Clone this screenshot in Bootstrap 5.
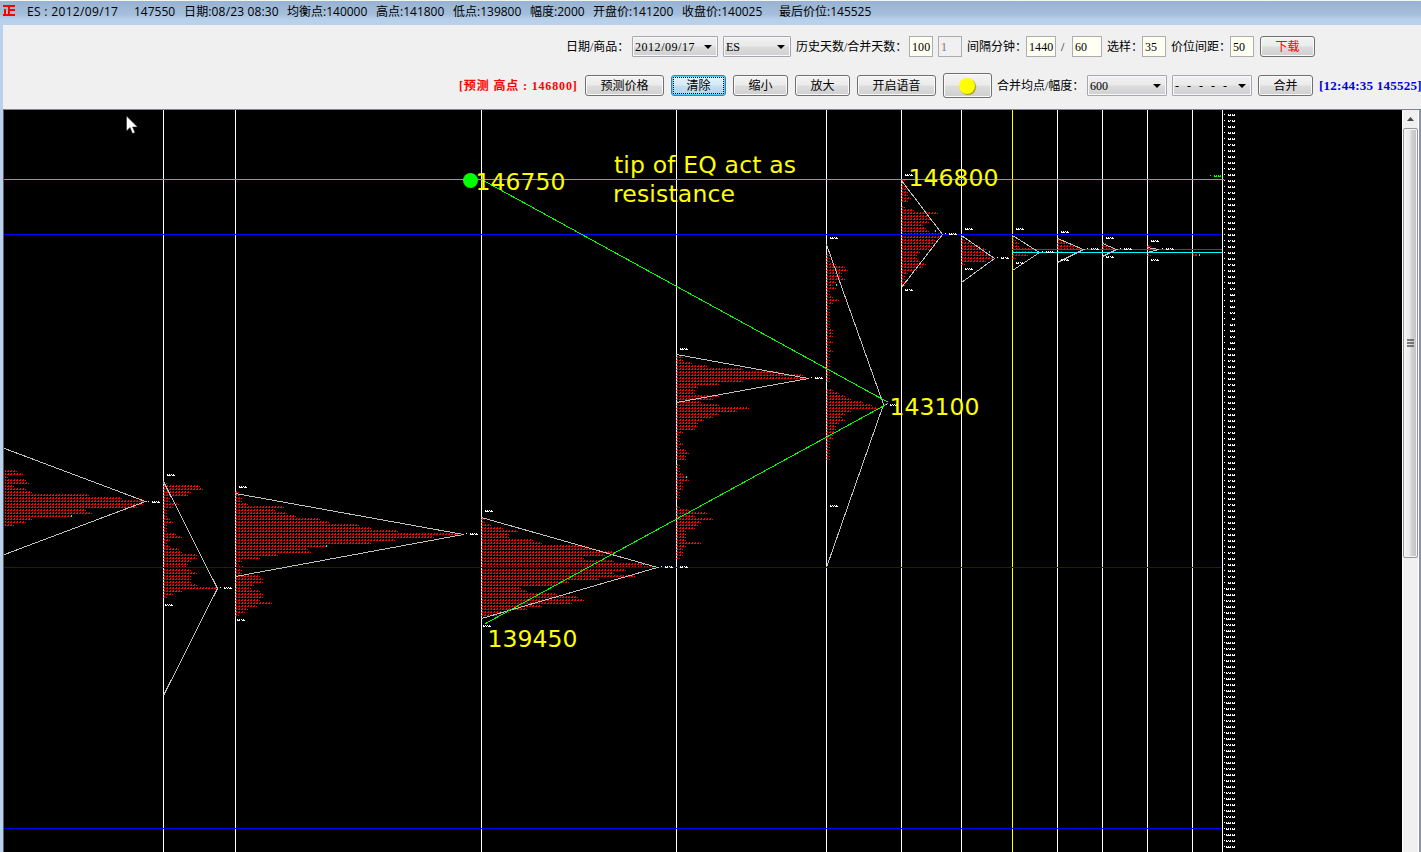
<!DOCTYPE html>
<html lang="zh-CN">
<head>
<meta charset="utf-8">
<meta name="viewport" content="width=device-width, initial-scale=1">
<title>ES 2012/09/17</title>
<link href="https://cdn.jsdelivr.net/npm/bootstrap@5.3.0/dist/css/bootstrap.min.css" rel="stylesheet">
<script src="https://cdn.jsdelivr.net/npm/bootstrap@5.3.0/dist/js/bootstrap.bundle.min.js"></script>
<style>
html,body{height:100%;overflow:hidden}
body{background:#b9d1ea;color:#000;font:12px/1 "Liberation Serif","Noto Sans CJK SC",serif}
.titlebar{height:25px;border-top:1px solid #f4f6f4;background:linear-gradient(#98b3d1,#a4bedb 55%,#b7cfe9 75%,#b9d1ea);font:12px/22px "Open Sans","Noto Sans CJK SC",sans-serif;padding-left:2px;gap:8px}
.logo{width:14px;height:12px;margin:4px 3px 0 0;flex:none}
.f42{width:42px}.f69{width:69px}.f81{width:81px}.f55{width:55px}.f91{width:91px;letter-spacing:.33px}.f95{width:95px;letter-spacing:.15px}
.titlebar .gapped{margin-left:8px}
.tools{height:84px;background:#f0f0f0;margin-left:3px}
.bar1{height:43px;gap:5px;padding-left:563px}
.bar2{height:35px;gap:7px;padding-left:456px}
.bar1>*,.bar2>*{flex:none;white-space:nowrap}
.cap{line-height:20px}
.bar1 .cap,.bar2 .cap{padding-top:1px}
.win{height:21px;padding:1px 0 0;border:1px solid #707070;border-radius:3px;background:linear-gradient(#f3f3f3,#ebebeb 48%,#dddddd 52%,#cfcfcf);box-shadow:inset 0 0 0 1px #fafafa;color:#000;font-size:12px;line-height:18px;text-align:center}
.win.hot{border-color:#3c7fb1;background:linear-gradient(#e5f3fb,#d5eaf6 48%,#c3dff0 52%,#b5d3e6);box-shadow:inset 0 0 0 1px #4fd0f5;outline:1px dotted #000;outline-offset:-3px}
.dd{height:21px;border:1px solid #a5a8b0;border-radius:1px;background:linear-gradient(#f1f1f1,#e9e9e9 48%,#dcdcdc 52%,#d0d0d0);box-shadow:inset 0 0 0 1px #f8f8f8;padding:0 5px 0 2px}
.dd i{border:4px solid transparent;border-top-color:#000;border-bottom:0}
.datum{letter-spacing:.54px}
.box{height:21px;border:1px solid #abadb3;background:#fffff2;padding-left:2px;line-height:20px;letter-spacing:.1px}
.box.off{background:#f0f0f0;color:#7a7a7a}
.w6{width:6px}.w24{width:24px}.w30{width:30px}.w54{width:54px}.w55{width:55px}.w61{width:61px}.w68{width:68px}.w79{width:79px}.w80{width:80px}.w83{width:83px}.w86{width:86px}.w108{width:108px}.w119{width:119px}
.lamp{width:49px;height:25px}
.lamp span{display:block;width:16px;height:16px;border-radius:50%;background:#ff0;box-shadow:1px 1px 1px #a09a20;margin:0 auto;position:relative;left:-1px}
.forecast{color:#f00;font-weight:700;line-height:18px;letter-spacing:.85px}
.clock{color:#0000e8;font-weight:700;font-size:13px;line-height:18px;letter-spacing:.25px}
#load{margin-left:1px;color:#f00}#mix,#dash{margin-left:-2px}#merge,#clk{margin-left:-1px}#dash span{letter-spacing:2.5px}
.stage{margin-left:3px;height:743px;border-top:1px solid #80848c;border-left:1px solid #555d68}
.plot{width:1398px;height:742px;background:#000;flex:none}
.scroll{width:16px;background:#f0f0f0;flex:none;border-left:1px solid #fff}
.up{height:18px}
.thumb{height:430px;border:1px solid #979797;border-radius:2px;background:linear-gradient(90deg,#f5f5f5,#e9e9e9 45%,#d3d3d8 55%,#bfbfc4);box-shadow:inset 0 0 0 1px #f6f6f6}
.edge{width:4px;border-left:1px solid #fff;background:#8a93a2}
svg{display:block}
</style>
</head>
<body>
<header class="titlebar d-flex text-nowrap">
  <svg class="logo" viewBox="0 0 14 12" fill="#f00"><path d="M1 0h12v2H8v2h5v2H8v3h5v2H1V9h1V4h2v5h2V2H1z"/></svg>
  <span class="f91">ES : 2012/09/17</span><span class="f42 gapped">147550</span><span class="f95">日期:08/23 08:30</span><span class="f81">均衡点:140000</span><span class="f69">高点:141800</span><span class="f69">低点:139800</span><span class="f55">幅度:2000</span><span class="f81">开盘价:141200</span><span class="f81">收盘价:140025</span><span class="gapped">最后价位:145525</span>
</header>
<section class="tools">
  <div class="bar1 d-flex align-items-center">
    <span class="cap w61">日期/商品：</span>
    <div class="dd w86 d-flex align-items-center justify-content-between"><span class="datum">2012/09/17</span><i></i></div>
    <div class="dd w68 d-flex align-items-center justify-content-between"><span>ES</span><i></i></div>
    <span class="cap w108">历史天数/合并天数：</span>
    <div class="box w24">100</div><div class="box off w24">1</div>
    <span class="cap w54">间隔分钟：</span>
    <div class="box w30">1440</div><span class="cap w6">/</span><div class="box w30">60</div>
    <span class="cap w30">选样：</span><div class="box w24">35</div>
    <span class="cap w54">价位间距：</span><div class="box w24">50</div>
    <button class="win w55" id="load">下载</button>
  </div>
  <div class="bar2 d-flex align-items-center">
    <span class="forecast w119">[预测 高点 : 146800]</span>
    <button class="win w79">预测价格</button><button class="win hot w55">清除</button><button class="win w55">缩小</button><button class="win w55">放大</button><button class="win w79">开启语音</button>
    <button class="win lamp"><span></span></button>
    <span class="cap w83" id="mix">合并均点/幅度：</span>
    <div class="dd w80 d-flex align-items-center justify-content-between"><span>600</span><i></i></div>
    <div class="dd w80 d-flex align-items-center justify-content-between" id="dash"><span>- - - - -</span><i></i></div>
    <button class="win w55" id="merge">合并</button>
    <span class="clock" id="clk">[12:44:35 145525]</span>
  </div>
</section>
<main class="stage d-flex">
  <svg class="plot" id="plot" viewBox="4 110 1398 742" shape-rendering="crispEdges">
    <defs><pattern id="cell" width="3" height="3" patternUnits="userSpaceOnUse" x="0" y="2"><path d="M2 0h1v2H1V1h1z" fill="#f00"/></pattern></defs>
    <g id="grid"></g><g id="profiles"></g><g id="marks"></g>
    <circle cx="470.5" cy="180.5" r="7.5" fill="#0f0" shape-rendering="auto"/>
    <g fill="#ff0" font-family="DejaVu Sans, sans-serif" font-size="23.5">
      <text x="475.500" y="190" textLength="90">146750</text>
      <text x="614" y="173" textLength="182">tip of EQ act as</text>
      <text x="613" y="202" textLength="122">resistance</text>
      <text x="908.500" y="186" textLength="90">146800</text>
      <text x="889.500" y="415" textLength="90">143100</text>
      <text x="487.500" y="647" textLength="90">139450</text>
    </g>
    <path d="M126.500 116v15l3.500-3.500 2.500 6 2.500-1-2.500-5.500h5z" fill="#fff" stroke="#222" stroke-width=".5" shape-rendering="auto"/>
  </svg>
  <div class="scroll">
    <div class="up d-flex align-items-center justify-content-center"><svg width="7" height="4"><path d="M0 4 3.500 0 7 4z" fill="#444"/></svg></div>
    <div class="thumb d-flex align-items-center justify-content-center"><svg width="8" height="9"><path d="M0 1h7M0 4h7M0 7h7" stroke="#555" stroke-width="1.500"/></svg></div>
  </div>
  <div class="edge"></div>
</main>
<script>
const NS='http://www.w3.org/2000/svg';
function add(id,tag,attrs){const e=document.createElementNS(NS,tag);for(const k in attrs)e.setAttribute(k,attrs[k]);document.getElementById(id).append(e)}
const px=(id,x,y,w,h,fill)=>add(id,'rect',{x,y,width:w,height:h,fill});
// session separators
[163,235,481,676,826,901,961,1057,1102,1147,1192,1222].forEach(x=>px('grid',x,110,1,742,'#fff'));
px('grid',1012,110,1,742,'#ff0');
// volume profiles: left edge, first row, cells in each row
const profiles=[
[4,470,[4,6,1,7,8,3,7,9,28,39,47,46,44,27,29,22,9,7,3]],
[163,482,[1,12,13,9,8,2,2,5,3,1,1,1,2,3,1,1,1,4,6,2,1,2,5,6,11,11,9,8,8,9,11,9,9,9,11,18,6,3,1]],
[235,491,[1,1,2,2,4,16,13,17,20,28,31,41,45,54,74,66,53,45,30,24,25,14,8,2,1,3,2,2,8,9,9,6,5,8,9,9,8,12,7,4,3,1]],
[481,518,[1,1,3,7,12,9,9,17,20,35,38,44,41,34,44,54,57,48,44,51,39,29,25,13,15,25,32,34,30,20,15,9,5]],
[676,356,[2,2,5,10,22,34,42,43,22,14,7,6,6,14,12,8,14,24,20,14,12,9,7,7,6,2,1,1,1,2,1,3,4,3,3,0,1,1,1,2,3,4,2,2,2,1,1,1,0,0,1,4,10,6,12,8,7,6,3,3,3,3,8,3,2,2,2,1]],
[826,254,[1,1,1,3,6,7,5,5,6,3,2,3,1,1,2,4,2,1,1,1,1,1,1,1,1,2,2,2,1,2,1,1,2,1,1,1,1,1,1,1,1,1,1,0,0,2,4,6,8,12,15,17,8,6,5,6,4,3,3,3,2,2,1,1,1,1,1,1,1]],
[901,179,[1,1,2,2,2,2,3,2,0,1,4,12,9,10,9,7,8,9,13,13,11,11,10,9,6,5,5,6,8,7,5,2,1,1,1,1]],
[961,236,[1,1,3,6,8,8,9,11,8,1]],
[1012,236,[1,1,2,2,7,7,5,1]],
[1057,239,[1,3,6,8,2]],[1102,242,[1,2,4]],[1147,245,[1,3,0,1]],[1192,254,[1]]];
profiles.forEach(([x,y,rows])=>{
  rows.forEach((n,i)=>{if(n)px('profiles',x+1,y+i*3,n*3,3,'url(#cell)')});
  if(x>4)rows.forEach((n,i)=>{if(n)px('profiles',x,y+i*3+1,1,1,'#f55')});
});
// price levels
px('marks',4,179,1220,1,'#0f0');
[234,567,828].forEach(y=>px('marks',4,y,1218,1,'#00f'));
px('marks',1012,249,210,1,'#f00');px('marks',1012,252,210,1,'#0ff');
// equilibrium triangles
[[4,448,145,501,554],[163,481,217,588,695],[235,493,463,534,576],[481,517,657,567,618],[676,354,808,378,402],[826,244,883,404,567],[901,180,942,234,287],[961,235,994,258,282],[1012,235,1039,252,270],[1057,238,1083,249,262],[1102,243,1116,249,256],[1147,247,1158,249,252]]
.forEach(([x,a,tx,ty,b])=>add('marks','path',{d:`M${x+.5} ${a+.5}L${tx+.5} ${ty+.5}L${x+.5} ${b+.5}`,fill:'none',stroke:'#c0c0c0'}));
add('marks','path',{d:'M481.500 179.500L887.500 402M888 403.500L485.500 623.500',fill:'none',stroke:'#0f0'});
// micro price tags: two pixel rows
function tag(x,y,w,c='#fff',v=0){let d='';for(let i=0;i<w;i+=2)d+=`M${x+i} ${y}h1v1h-1z`;
  const hole=v%4===1?2:v%4===3?3:-1;for(let i=0;i<w;i++)if(i!==hole&&!(w>5&&i===w-4))d+=`M${x+i} ${y+1}h1v1h-1z`;
  add('marks','path',{d,fill:c})}
for(let y=114,i=0;y<852;y+=6,i++){
  const x=y<285?1228:y===318?1232:y<348?1230:y<586?1228:1226;
  px('marks',1224,y,1,1,'#fff');tag(x,y,1235-x,'#fff',i);
}
[[167,474],[165,604],[239,486],[237,619],[485,510],[483,625],[680,348],[680,566],[830,237],[830,505],[905,174],[905,289],[965,228],[965,268],[1016,228],[1016,262],[1061,231],[1061,259],[1106,237],[1106,256],[1151,240],[1151,259]].forEach(([x,y],i)=>tag(x,y,8,'#fff',i));
[[148,501],[220,587],[466,533],[661,566],[811,377],[886,404],[945,233],[997,257],[1042,251],[1087,248],[1120,248],[1162,248]].forEach(([x,y],i)=>{px('marks',x,y,1,1,'#fff');tag(x+4,y,8,'#fff',i)});
px('marks',1210,175,1,1,'#0f0');tag(1214,175,7,'#0f0',0);
// last price and opening cells
[[71,515],[326,545],[643,563],[686,476],[836,284],[935,230],[989,251],[1012,239],[1199,254]].forEach(([x,y])=>px('marks',x,y,1,2,'#0ff'));
[[163,515],[235,584],[481,542],[901,284],[1057,239],[1192,254]].forEach(([x,y])=>px('marks',x,y,1,2,'#ff0'));
px('marks',1195,254,2,2,'#f00');
</script>
</body>
</html>
